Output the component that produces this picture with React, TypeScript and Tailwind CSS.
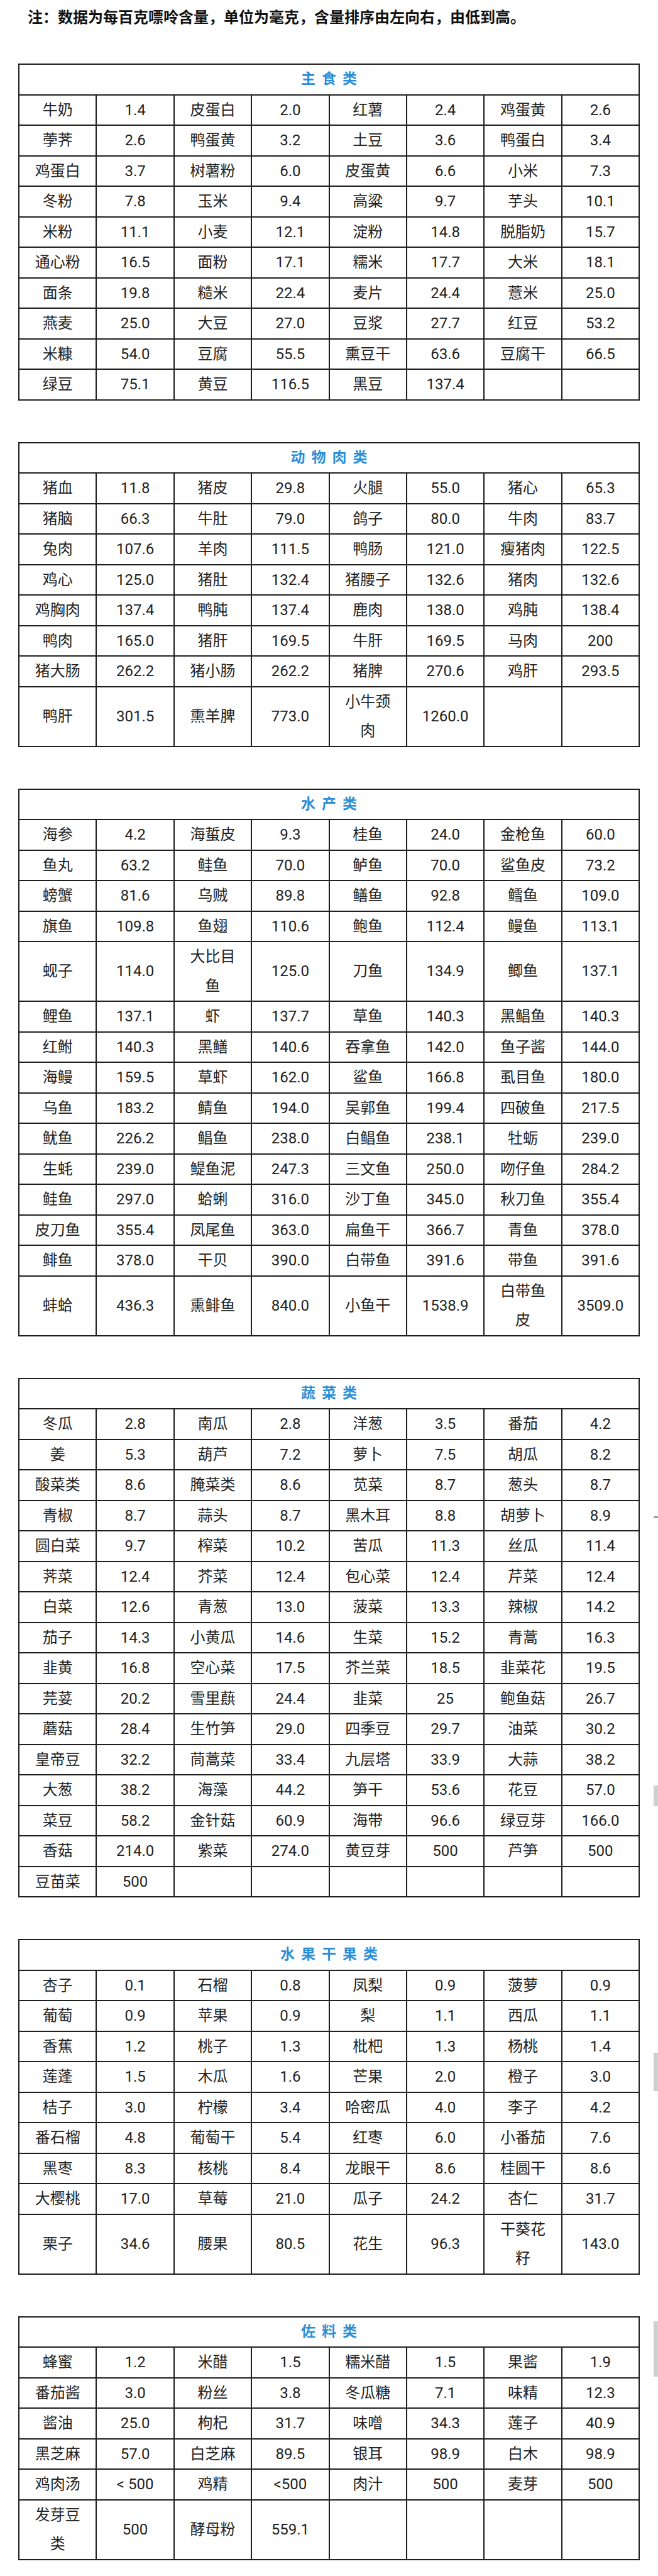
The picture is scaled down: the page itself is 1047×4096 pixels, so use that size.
// Purine content tables
// Food groups listed as name / value pairs, four pairs per row

type Pair = [string, string];

interface Section {
  title: string;
  items: Pair[];
}

const sections: Section[] = [
  {
    title: '主食类',
    items: [
      ['牛奶', '1.4'], ['皮蛋白', '2.0'], ['红薯', '2.4'], ['鸡蛋黄', '2.6'],
      ['荸荠', '2.6'], ['鸭蛋黄', '3.2'], ['土豆', '3.6'], ['鸭蛋白', '3.4'],
      ['鸡蛋白', '3.7'], ['树薯粉', '6.0'], ['皮蛋黄', '6.6'], ['小米', '7.3'],
      ['冬粉', '7.8'], ['玉米', '9.4'], ['高粱', '9.7'], ['芋头', '10.1'],
      ['米粉', '11.1'], ['小麦', '12.1'], ['淀粉', '14.8'], ['脱脂奶', '15.7'],
      ['通心粉', '16.5'], ['面粉', '17.1'], ['糯米', '17.7'], ['大米', '18.1'],
      ['面条', '19.8'], ['糙米', '22.4'], ['麦片', '24.4'], ['薏米', '25.0'],
      ['燕麦', '25.0'], ['大豆', '27.0'], ['豆浆', '27.7'], ['红豆', '53.2'],
      ['米糠', '54.0'], ['豆腐', '55.5'], ['熏豆干', '63.6'], ['豆腐干', '66.5'],
      ['绿豆', '75.1'], ['黄豆', '116.5'], ['黑豆', '137.4'],
    ],
  },
  {
    title: '动物肉类',
    items: [
      ['猪血', '11.8'], ['猪皮', '29.8'], ['火腿', '55.0'], ['猪心', '65.3'],
      ['猪脑', '66.3'], ['牛肚', '79.0'], ['鸽子', '80.0'], ['牛肉', '83.7'],
      ['兔肉', '107.6'], ['羊肉', '111.5'], ['鸭肠', '121.0'], ['瘦猪肉', '122.5'],
      ['鸡心', '125.0'], ['猪肚', '132.4'], ['猪腰子', '132.6'], ['猪肉', '132.6'],
      ['鸡胸肉', '137.4'], ['鸭肫', '137.4'], ['鹿肉', '138.0'], ['鸡肫', '138.4'],
      ['鸭肉', '165.0'], ['猪肝', '169.5'], ['牛肝', '169.5'], ['马肉', '200'],
      ['猪大肠', '262.2'], ['猪小肠', '262.2'], ['猪脾', '270.6'], ['鸡肝', '293.5'],
      ['鸭肝', '301.5'], ['熏羊脾', '773.0'], ['小牛颈\n肉', '1260.0'],
    ],
  },
  {
    title: '水产类',
    items: [
      ['海参', '4.2'], ['海蜇皮', '9.3'], ['桂鱼', '24.0'], ['金枪鱼', '60.0'],
      ['鱼丸', '63.2'], ['鲑鱼', '70.0'], ['鲈鱼', '70.0'], ['鲨鱼皮', '73.2'],
      ['螃蟹', '81.6'], ['乌贼', '89.8'], ['鳝鱼', '92.8'], ['鳕鱼', '109.0'],
      ['旗鱼', '109.8'], ['鱼翅', '110.6'], ['鲍鱼', '112.4'], ['鳗鱼', '113.1'],
      ['蚬子', '114.0'], ['大比目\n鱼', '125.0'], ['刀鱼', '134.9'], ['鲫鱼', '137.1'],
      ['鲤鱼', '137.1'], ['虾', '137.7'], ['草鱼', '140.3'], ['黑鲳鱼', '140.3'],
      ['红鲋', '140.3'], ['黑鳝', '140.6'], ['吞拿鱼', '142.0'], ['鱼子酱', '144.0'],
      ['海鳗', '159.5'], ['草虾', '162.0'], ['鲨鱼', '166.8'], ['虱目鱼', '180.0'],
      ['乌鱼', '183.2'], ['鲭鱼', '194.0'], ['吴郭鱼', '199.4'], ['四破鱼', '217.5'],
      ['鱿鱼', '226.2'], ['鲳鱼', '238.0'], ['白鲳鱼', '238.1'], ['牡蛎', '239.0'],
      ['生蚝', '239.0'], ['鳀鱼泥', '247.3'], ['三文鱼', '250.0'], ['吻仔鱼', '284.2'],
      ['鲑鱼', '297.0'], ['蛤蜊', '316.0'], ['沙丁鱼', '345.0'], ['秋刀鱼', '355.4'],
      ['皮刀鱼', '355.4'], ['凤尾鱼', '363.0'], ['扁鱼干', '366.7'], ['青鱼', '378.0'],
      ['鲱鱼', '378.0'], ['干贝', '390.0'], ['白带鱼', '391.6'], ['带鱼', '391.6'],
      ['蚌蛤', '436.3'], ['熏鲱鱼', '840.0'], ['小鱼干', '1538.9'], ['白带鱼\n皮', '3509.0'],
    ],
  },
  {
    title: '蔬菜类',
    items: [
      ['冬瓜', '2.8'], ['南瓜', '2.8'], ['洋葱', '3.5'], ['番茄', '4.2'],
      ['姜', '5.3'], ['葫芦', '7.2'], ['萝卜', '7.5'], ['胡瓜', '8.2'],
      ['酸菜类', '8.6'], ['腌菜类', '8.6'], ['苋菜', '8.7'], ['葱头', '8.7'],
      ['青椒', '8.7'], ['蒜头', '8.7'], ['黑木耳', '8.8'], ['胡萝卜', '8.9'],
      ['圆白菜', '9.7'], ['榨菜', '10.2'], ['苦瓜', '11.3'], ['丝瓜', '11.4'],
      ['荠菜', '12.4'], ['芥菜', '12.4'], ['包心菜', '12.4'], ['芹菜', '12.4'],
      ['白菜', '12.6'], ['青葱', '13.0'], ['菠菜', '13.3'], ['辣椒', '14.2'],
      ['茄子', '14.3'], ['小黄瓜', '14.6'], ['生菜', '15.2'], ['青蒿', '16.3'],
      ['韭黄', '16.8'], ['空心菜', '17.5'], ['芥兰菜', '18.5'], ['韭菜花', '19.5'],
      ['芫荽', '20.2'], ['雪里蕻', '24.4'], ['韭菜', '25'], ['鲍鱼菇', '26.7'],
      ['蘑菇', '28.4'], ['生竹笋', '29.0'], ['四季豆', '29.7'], ['油菜', '30.2'],
      ['皇帝豆', '32.2'], ['茼蒿菜', '33.4'], ['九层塔', '33.9'], ['大蒜', '38.2'],
      ['大葱', '38.2'], ['海藻', '44.2'], ['笋干', '53.6'], ['花豆', '57.0'],
      ['菜豆', '58.2'], ['金针菇', '60.9'], ['海带', '96.6'], ['绿豆芽', '166.0'],
      ['香菇', '214.0'], ['紫菜', '274.0'], ['黄豆芽', '500'], ['芦笋', '500'],
      ['豆苗菜', '500'],
    ],
  },
  {
    title: '水果干果类',
    items: [
      ['杏子', '0.1'], ['石榴', '0.8'], ['凤梨', '0.9'], ['菠萝', '0.9'],
      ['葡萄', '0.9'], ['苹果', '0.9'], ['梨', '1.1'], ['西瓜', '1.1'],
      ['香蕉', '1.2'], ['桃子', '1.3'], ['枇杷', '1.3'], ['杨桃', '1.4'],
      ['莲蓬', '1.5'], ['木瓜', '1.6'], ['芒果', '2.0'], ['橙子', '3.0'],
      ['桔子', '3.0'], ['柠檬', '3.4'], ['哈密瓜', '4.0'], ['李子', '4.2'],
      ['番石榴', '4.8'], ['葡萄干', '5.4'], ['红枣', '6.0'], ['小番茄', '7.6'],
      ['黑枣', '8.3'], ['核桃', '8.4'], ['龙眼干', '8.6'], ['桂圆干', '8.6'],
      ['大樱桃', '17.0'], ['草莓', '21.0'], ['瓜子', '24.2'], ['杏仁', '31.7'],
      ['栗子', '34.6'], ['腰果', '80.5'], ['花生', '96.3'], ['干葵花\n籽', '143.0'],
    ],
  },
  {
    title: '佐料类',
    items: [
      ['蜂蜜', '1.2'], ['米醋', '1.5'], ['糯米醋', '1.5'], ['果酱', '1.9'],
      ['番茄酱', '3.0'], ['粉丝', '3.8'], ['冬瓜糖', '7.1'], ['味精', '12.3'],
      ['酱油', '25.0'], ['枸杞', '31.7'], ['味噌', '34.3'], ['莲子', '40.9'],
      ['黑芝麻', '57.0'], ['白芝麻', '89.5'], ['银耳', '98.9'], ['白木', '98.9'],
      ['鸡肉汤', '< 500'], ['鸡精', '<500'], ['肉汁', '500'], ['麦芽', '500'],
      ['发芽豆\n类', '500'], ['酵母粉', '559.1'],
    ],
  },
];

function PurineTable({ section }: { section: Section }) {
  // pad to full rows of four pairs
  const cells: string[] = section.items.flatMap(([name, value]) => [name, value]);
  while (cells.length % 8 !== 0) cells.push('');

  return (
    <div className="grid grid-cols-8 gap-[2px] p-[2px] bg-[#1e1e1e] w-[989px] mx-auto">
      {/* Header */}
      <div className="col-span-8 bg-white h-[46.5px] flex items-center justify-center pl-[10px] text-[23px] font-bold tracking-[10px] text-[#2b8fd8]">
        {section.title}
      </div>

      {cells.map((text, i) => (
        <div
          key={i}
          className="bg-white min-h-[46.5px] flex items-center justify-center text-center whitespace-pre-line text-[24px] leading-[46.5px] text-[#222]"
        >
          {text}
        </div>
      ))}
    </div>
  );
}

export default function App() {
  return (
    <div className="relative bg-white w-[1047px] min-h-[4096px] pt-[10px] font-[Roboto,'Noto_Sans_CJK_SC',sans-serif]">
      {/* Note */}
      <p className="pl-[44px] text-[24px] leading-[36px] font-bold text-[#111]">
        注：数据为每百克嘌呤含量，单位为毫克，含量排序由左向右，由低到高。
      </p>

      {/* Tables */}
      <div className="mt-[55px] flex flex-col gap-[66px]">
        {sections.map((section) => (
          <PurineTable key={section.title} section={section} />
        ))}
      </div>

      {/* Scroll marks along the right edge */}
      <div className="absolute right-0 top-[2411px] w-[7px] h-[3px] bg-[#9a9a9a]" />
      <div className="absolute right-0 top-[2839px] w-[7px] h-[33px] bg-[#cfcfcf]" />
      <div className="absolute right-0 top-[3264px] w-[7px] h-[61px] bg-[#cfcfcf]" />
      <div className="absolute right-0 top-[3691px] w-[7px] h-[88px] bg-[#cfcfcf]" />
    </div>
  );
}
